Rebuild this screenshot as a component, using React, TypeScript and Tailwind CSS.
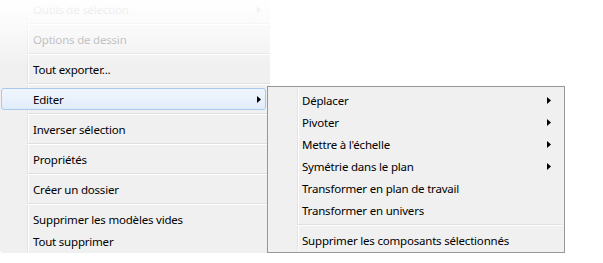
import React from "react";

const Arrow = ({ color = "#000" }: { color?: string }) => (
  <svg width="4" height="7" viewBox="0 0 4 7" className="block">
    <path d="M0 0 L4 3.5 L0 7 Z" fill={color} />
  </svg>
);

const Sep = ({ left }: { left: string }) => (
  <div className={`h-[8px] flex flex-col justify-center ${left}`}>
    <div className="h-px bg-[#e0e0e0]" />
    <div className="h-px bg-white" />
  </div>
);

type Item = { label: string; arrow?: boolean; disabled?: boolean; active?: boolean };

function MainRow({ label, arrow, disabled, active }: Item) {
  return (
    <div className="relative h-[22px] flex items-center">
      {active && (
        <div className="absolute left-[1px] right-[4px] top-0 bottom-0 rounded-[3px] border border-[#a8c8f0] bg-gradient-to-b from-[#f1f6fd] to-[#e1ecfa]" />
      )}
      <div className={`relative pl-[33px] pt-[1px] flex-1 ${disabled ? "text-[#8d8d8d]" : "text-black"}`}>{label}</div>
      {arrow && (
        <div className="relative pr-[9px] flex">
          <Arrow color={disabled ? "#9a9a9a" : "#000"} />
        </div>
      )}
    </div>
  );
}

function SubRow({ label, arrow }: Item) {
  return (
    <div className="h-[22px] flex items-center">
      <div className="pl-[32px] pt-[1px] flex-1 text-black">{label}</div>
      {arrow && (
        <div className="pr-[11px] flex">
          <Arrow />
        </div>
      )}
    </div>
  );
}

export default function App() {
  return (
    <div
      className="relative w-[603px] h-[263px] bg-white overflow-hidden text-[11.5px] tracking-[-0.2px] leading-none"
      style={{ fontFamily: '"Segoe UI", "Noto Sans", sans-serif' }}
    >
      {/* main menu */}
      <div className="relative w-[270px] h-[255px] mt-[-2px] bg-[#f0f0f0] rounded-bl-[4px]">
        <div className="absolute left-[27px] top-0 bottom-[2px] w-px bg-[#e2e3e3]" />
        <div className="absolute left-[28px] top-0 bottom-[2px] w-px bg-white" />
        <div className="relative flex flex-col">
          <MainRow label="Outils de sélection" arrow disabled />
          <Sep left="ml-[27px]" />
          <MainRow label="Options de dessin" disabled />
          <Sep left="ml-[27px]" />
          <MainRow label="Tout exporter..." />
          <Sep left="ml-[27px]" />
          <MainRow label="Editer" arrow active />
          <Sep left="ml-[27px]" />
          <MainRow label="Inverser sélection" />
          <Sep left="ml-[27px]" />
          <MainRow label="Propriétés" />
          <Sep left="ml-[27px]" />
          <MainRow label="Créer un dossier" />
          <Sep left="ml-[27px]" />
          <MainRow label="Supprimer les modèles vides" />
          <MainRow label="Tout supprimer" />
        </div>
        <div className="absolute left-0 right-0 top-0 h-[70px] bg-gradient-to-b from-white via-white/60 to-white/0 pointer-events-none" />
      </div>

      {/* submenu */}
      <div className="absolute left-[267px] top-[86px] w-[298px] h-[167px] border border-[#979797] bg-[#f0f0f0] p-[2px]">
        <div className="absolute left-[29px] top-[2px] bottom-[2px] w-px bg-[#e2e3e3]" />
        <div className="absolute left-[30px] top-[2px] bottom-[2px] w-px bg-white" />
        <div className="relative flex flex-col">
          <SubRow label="Déplacer" arrow />
          <SubRow label="Pivoter" arrow />
          <SubRow label="Mettre à l'échelle" arrow />
          <SubRow label="Symétrie dans le plan" arrow />
          <SubRow label="Transformer en plan de travail" />
          <SubRow label="Transformer en univers" />
          <Sep left="ml-[27px]" />
          <SubRow label="Supprimer les composants sélectionnés" />
        </div>
      </div>
    </div>
  );
}
